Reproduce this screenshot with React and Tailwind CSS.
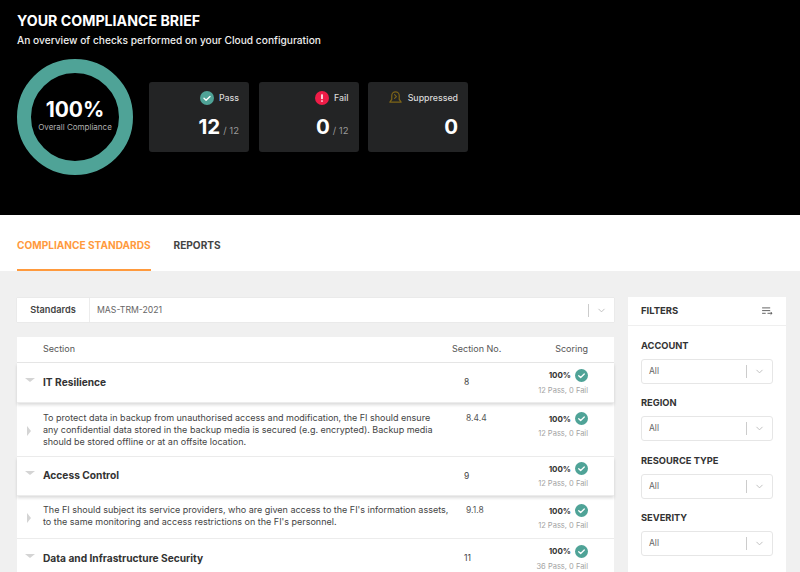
import React from 'react';
import { ChevronDown } from 'lucide-react';

const font = { fontFamily: 'Inter, "Liberation Sans", sans-serif' };

const CheckBadge = ({ size = 'w-[13px] h-[13px]' }) => (
  <svg viewBox="0 0 14 14" className={size}>
    <circle cx="7" cy="7" r="7" fill="#4fa397" />
    <path d="M4 7.2l2.1 2L10 5.4" fill="none" stroke="#fff" strokeWidth="1.4" strokeLinecap="round" strokeLinejoin="round" />
  </svg>
);

const FailBadge = () => (
  <svg viewBox="0 0 14 14" className="w-[14px] h-[14px]">
    <circle cx="7" cy="7" r="7" fill="#ef1c47" />
    <rect x="6.2" y="3.2" width="1.6" height="5" rx="0.6" fill="#fff" />
    <rect x="6.2" y="9.2" width="1.6" height="1.6" rx="0.6" fill="#fff" />
  </svg>
);

const SuppressedBadge = () => (
  <svg viewBox="0 0 16 16" className="w-[15px] h-[15px]" fill="none" stroke="#7d6417" strokeWidth="1.3">
    <path d="M4 10V6a4 4 0 0 1 8 0v4l2 3H2z" strokeLinejoin="round" />
    <path d="M7 5l2 2-2 2" strokeLinecap="round" strokeLinejoin="round" />
  </svg>
);

const StatCard = ({ icon, label, value, total }) => (
  <div className="w-[100px] h-[70px] bg-[#232425] rounded-[3px] pr-[10px] pt-[8px] flex flex-col items-end">
    <div className="flex items-center gap-[5px] h-[15px]">
      {icon}
      <span className="text-[8.8px] font-medium text-[#d8d8d8]">{label}</span>
    </div>
    <div className="flex items-baseline mt-[10px]">
      <span className="text-[20.5px] leading-[24px] font-bold text-white">{value}</span>
      {total && <span className="text-[9.5px] text-[#9a9a9a] ml-[3px]">/ {total}</span>}
    </div>
  </div>
);

const Caret = () => (
  <div className="w-0 h-0 border-l-[5px] border-r-[5px] border-t-[4px] border-l-transparent border-r-transparent border-t-[#d4d4d4]" />
);

const SideCaret = () => (
  <div className="w-0 h-0 border-t-[5px] border-b-[5px] border-l-[4px] border-t-transparent border-b-transparent border-l-[#d4d4d4]" />
);

const Score = ({ detail }) => (
  <div className="w-[108px] pr-[26px] flex flex-col items-end">
    <div className="flex items-center gap-[4px]">
      <span className="text-[8px] font-bold text-[#333]">100%</span>
      <CheckBadge />
    </div>
    <span className="text-[7.5px] text-[#a3a3a3] mt-[3px]">{detail}</span>
  </div>
);

const SectionRow = ({ title, no, detail, h, shadow }) => (
  <div className={`${h} flex items-center border-b border-[#ececec] ${shadow ? 'shadow-[0_2px_3px_rgba(0,0,0,0.14)] relative' : ''}`}>
    <div className="w-[26px] pl-[8px] -mt-[6px]"><Caret /></div>
    <div className="w-[420px] text-[10.2px] font-bold text-[#333]">{title}</div>
    <div className="w-[43px] text-[8.5px] text-[#444] pl-[1px]">{no}</div>
    <Score detail={detail} />
  </div>
);

const ControlRow = ({ lines, no, detail, h, pt }) => (
  <div className={`${h} ${pt} flex items-start border-b border-[#ececec]`}>
    <div className="w-[26px] pl-[10px] self-center -mt-[6px]"><SideCaret /></div>
    <div className="w-[420px] text-[9px] leading-[12px] text-[#444]">
      {lines.map((l) => <div key={l} className="whitespace-nowrap">{l}</div>)}
    </div>
    <div className="w-[43px] text-[8.5px] leading-[12px] text-[#555] pl-[3px]">{no}</div>
    <Score detail={detail} />
  </div>
);

const Filter = ({ label }) => (
  <div className="mb-[12.3px]">
    <div className="text-[9.3px] leading-[14px] font-bold text-[#333] mb-[6px]">{label}</div>
    <div className="h-[25px] border border-[#e6e6e6] rounded-[3px] flex items-center pl-[7px]">
      <span className="flex-1 text-[8.5px] text-[#666]">All</span>
      <div className="w-px h-[13px] bg-[#ccc]" />
      <ChevronDown className="w-[11px] h-[11px] text-[#bbb] mx-[7px]" />
    </div>
  </div>
);

export default function App() {
  return (
    <div style={font} className="w-[800px] h-[572px] overflow-hidden bg-[#f0f0f0]">
      <div className="h-[215px] bg-black px-[17px] pt-[13px]">
        <h1 className="text-[14.2px] leading-[15px] font-bold text-white">YOUR COMPLIANCE BRIEF</h1>
        <p className="text-[10.2px] leading-[12px] mt-[6px] text-[#eee] font-medium">An overview of checks performed on your Cloud configuration</p>
        <div className="flex items-center mt-[13px]">
          <div className="w-[116px] h-[116px] rounded-full border-[14px] border-[#4fa397] flex flex-col items-center justify-center pb-[3px] shrink-0">
            <span className="text-[21px] leading-[22px] font-bold text-white">100%</span>
            <span className="text-[8px] leading-[10px] mt-[1px] text-[#b0b0b0] whitespace-nowrap">Overall Compliance</span>
          </div>
          <div className="flex gap-[9.5px] ml-[16px]">
            <StatCard icon={<CheckBadge size="w-[14px] h-[14px]" />} label="Pass" value="12" total="12" />
            <StatCard icon={<FailBadge />} label="Fail" value="0" total="12" />
            <StatCard icon={<SuppressedBadge />} label="Suppressed" value="0" />
          </div>
        </div>
      </div>

      <div className="h-[56px] bg-white flex px-[17px] gap-[23px]">
        <div className="h-full border-b-2 border-[#ff9a3d] flex items-center pt-[7px] text-[10.1px] font-bold text-[#ff9a3d]">COMPLIANCE STANDARDS</div>
        <div className="h-full flex items-center pt-[7px] pb-[2px] text-[10.1px] font-bold text-[#444]">REPORTS</div>
      </div>

      <div className="flex items-start pl-[17px] pt-[27px] gap-[14px]">
        <div className="w-[597px] shrink-0">
          <div className="h-[24px] bg-white flex items-center shadow-[0_0_1px_rgba(0,0,0,0.15)]">
            <div className="w-[73px] h-full border-r border-[#ececec] flex items-center justify-center text-[9.2px] font-semibold text-[#444]">Standards</div>
            <span className="flex-1 pl-[7px] pt-[1px] text-[8.7px] text-[#666]">MAS-TRM-2021</span>
            <div className="w-px h-[13px] bg-[#ccc]" />
            <ChevronDown className="w-[11px] h-[11px] text-[#bbb] mx-[7px]" />
          </div>

          <div className="bg-white mt-[15px]">
            <div className="h-[26px] flex items-center pb-[2px] border-b border-[#e6e6e6] text-[9px] text-[#555]">
              <div className="w-[26px]" />
              <div className="w-[409px]">Section</div>
              <div className="w-[60px]">Section No.</div>
              <div className="w-[76px] text-right">Scoring</div>
            </div>
            <SectionRow title="IT Resilience" no="8" detail="12 Pass, 0 Fail" h="h-[40px]" shadow />
            <ControlRow h="h-[54px]" pt="pt-[9px]" no="8.4.4" detail="12 Pass, 0 Fail" lines={[
              'To protect data in backup from unauthorised access and modification, the FI should ensure',
              'any confidential data stored in the backup media is secured (e.g. encrypted). Backup media',
              'should be stored offline or at an offsite location.',
            ]} />
            <SectionRow title="Access Control" no="9" detail="12 Pass, 0 Fail" h="h-[39px]" shadow />
            <ControlRow h="h-[43px]" pt="pt-[8px]" no="9.1.8" detail="12 Pass, 0 Fail" lines={[
              "The FI should subject its service providers, who are given access to the FI's information assets,",
              "to the same monitoring and access restrictions on the FI's personnel.",
            ]} />
            <SectionRow title="Data and Infrastructure Security" no="11" detail="36 Pass, 0 Fail" h="h-[40px]" />
          </div>
        </div>

        <div className="w-[158px] shrink-0 bg-white -mt-px h-[300px]">
          <div className="h-[29px] border-b border-[#efefef] flex items-center justify-between px-[13px] pt-[1px]">
            <span className="text-[9.5px] font-bold text-[#333]">FILTERS</span>
            <svg viewBox="0 0 12 10" className="w-[11px] h-[9px]" fill="none" stroke="#555" strokeWidth="1">
              <path d="M0 1h9M0 4h9M0 7h4M6 7h5M9.5 5.5L11 7 9.5 8.5" />
            </svg>
          </div>
          <div className="px-[13px] pt-[13px]">
            <Filter label="ACCOUNT" />
            <Filter label="REGION" />
            <Filter label="RESOURCE TYPE" />
            <Filter label="SEVERITY" />
          </div>
        </div>
      </div>
    </div>
  );
}
